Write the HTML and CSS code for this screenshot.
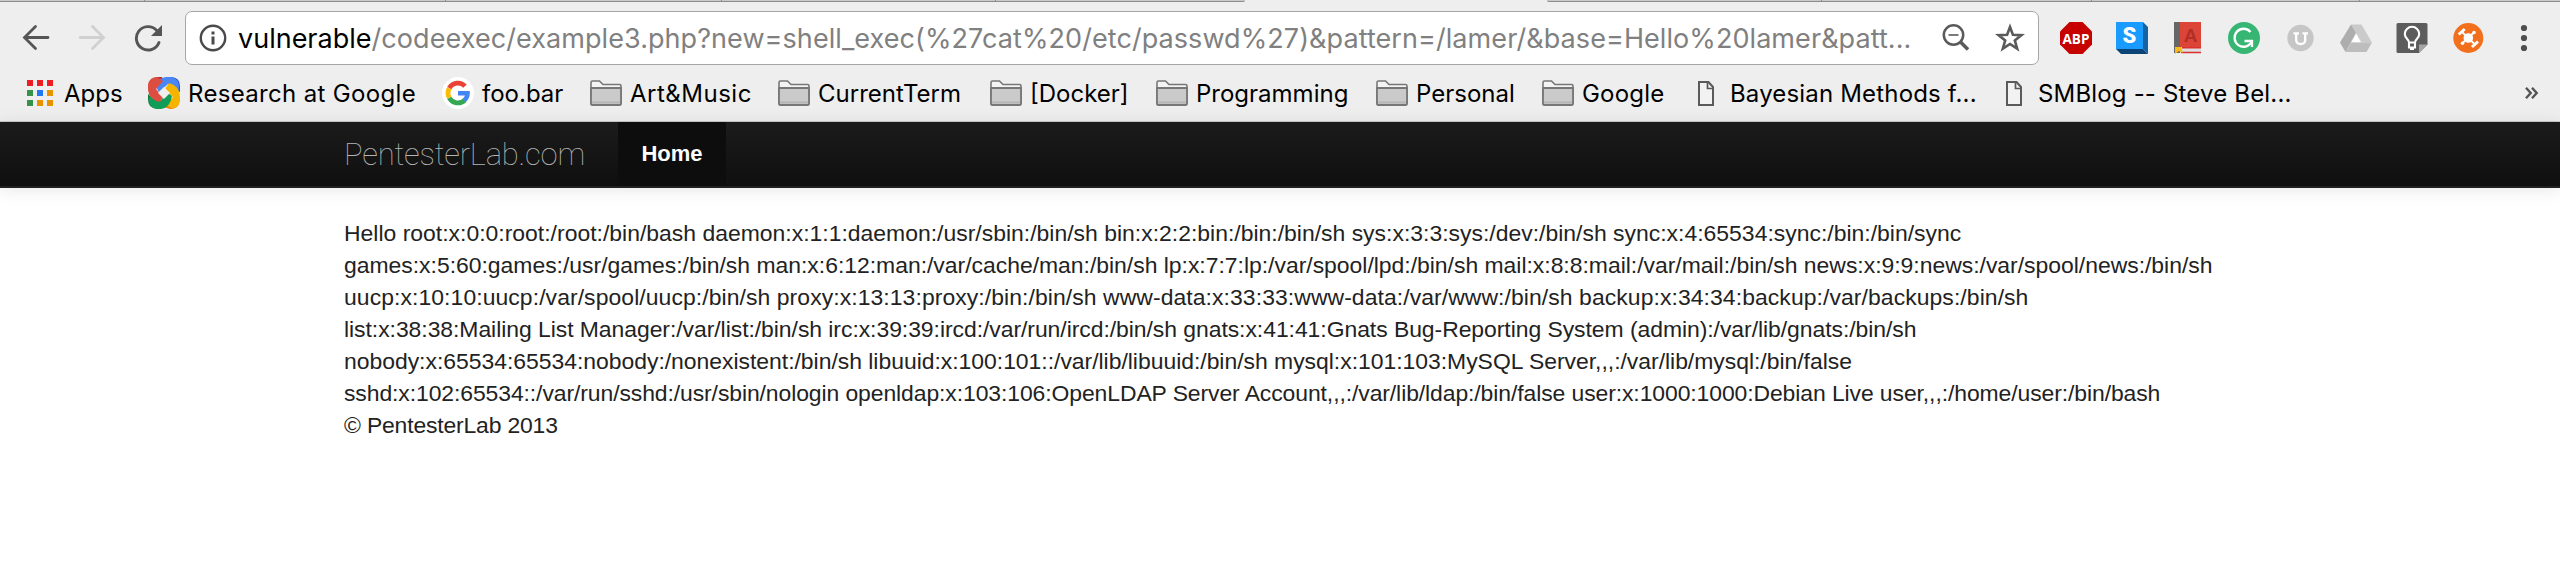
FILE: index.html
```
<!DOCTYPE html>
<html lang="en">
<head>
<meta charset="utf-8">
<title>PentesterLab.com</title>
<link rel="stylesheet" href="styles.css">
</head>
<body>
<svg width="0" height="0" class="defs" aria-hidden="true">
  <symbol id="folder" viewBox="0 0 32 32">
    <path d="M1 26V5.5Q1 4 2.500 4H9.500L13 7.500H29.500Q31 7.500 31 9V26.500Q31 28 29.500 28H2.500Q1 28 1 26.500Z" fill="#f4f4f4" stroke="#777" stroke-width="1.6"/>
    <path d="M1 11H31V26.500Q31 28 29.500 28H2.500Q1 28 1 26.500Z" fill="#cacaca" stroke="#777" stroke-width="1.8"/>
    <path d="M2 25.500H30" stroke="#b5b5b5" stroke-width="2"/>
  </symbol>
  <symbol id="page" viewBox="0 0 32 32">
    <path d="M9 5H18.500L23 10V28H9Z" fill="#f2f2f2" stroke="#5a5a5a" stroke-width="2"/>
    <path d="M17.500 5V11.500H23" fill="none" stroke="#5a5a5a" stroke-width="1.700"/>
  </symbol>
</svg>

<header class="chrome">
  <div class="tabs">
    <div class="tabgroup left"><i></i><i></i><i></i><i></i></div>
    <div class="tabgroup right"><i></i><i></i><i></i></div>
  </div>

  <div class="toolbar">
    <svg class="nav-icon" viewBox="0 0 28 32" fill="none" stroke="#555" stroke-width="2.800" stroke-linecap="round"><path d="M26 15.500H3M13.500 4.500L2.500 15.500L13.500 26.500"/></svg>
    <svg class="nav-icon" viewBox="0 0 28 32" fill="none" stroke="#d0d0d0" stroke-width="2.800" stroke-linecap="round"><path d="M2.300 15.500H25M14.500 4.500L25.500 15.500L14.500 26.500"/></svg>
    <svg class="nav-icon" viewBox="0 0 28 32"><path d="M22.500 8.200A11.700 11.700 0 1 0 25 20.500" fill="none" stroke="#555" stroke-width="2.900" stroke-linecap="round"/><path d="M28 3V14H17Z" fill="#555"/></svg>

    <div class="omnibox">
      <svg class="info" viewBox="0 0 28 28"><circle cx="14" cy="14" r="12.200" fill="none" stroke="#4a4a4a" stroke-width="2.400"/><path d="M14 7.500V10.500M14 12.500V20.500" stroke="#4a4a4a" stroke-width="3"/></svg>
      <div class="url"><span class="host">vulnerable</span><span class="path">/codeexec/example3.php?new=shell_exec(%27cat%20/etc/passwd%27)&amp;pattern=/lamer/&amp;base=Hello%20lamer&amp;patt...</span></div>
      <svg class="zoom" viewBox="0 0 28 28" fill="none" stroke="#5a5a5a"><circle cx="11.500" cy="11" r="9.700" stroke-width="2.500"/><path d="M6.500 11H16.500" stroke-width="1.600"/><path d="M18.500 18L26 25.500" stroke-width="3.500"/></svg>
      <svg class="star" viewBox="0 0 30 30"><path d="M15 4L17.900 11.700L26.500 12.100L19.800 17.400L22.200 25.700L15 21L7.800 25.700L10.200 17.400L3.500 12.100L12.100 11.700Z" fill="none" stroke="#5a5a5a" stroke-width="2.600"/></svg>
    </div>

    <div class="extensions">
      <svg viewBox="0 0 32 32"><path d="M9.500 0H22.500L32 9.500V22.500L22.500 32H9.500L0 22.500V9.500Z" fill="#c70000"/><text x="16" y="22" text-anchor="middle" class="abp" textLength="27" lengthAdjust="spacingAndGlyphs">ABP</text></svg>
      <svg viewBox="0 0 32 32"><path d="M27 0L32 5V32L27 27Z" fill="#1464a5"/><path d="M0 27H27L32 32H5Z" fill="#0c4478"/><path d="M0 0H27V27H0Z" fill="#1a9bff"/><text x="13.500" y="21" text-anchor="middle" class="ess">S</text></svg>
      <svg viewBox="0 0 32 32"><path d="M2 0H8V31H2Z" fill="#666"/><path d="M8 0H29V25H8Z" fill="#dc4437"/><path d="M8 26H29V31H8Z" fill="#ddd"/><path d="M10 25.800H29M9 30.500H29" stroke="#dc3030" stroke-width="1.600"/><path d="M3 25H9L11 31L7 29L3 32Z" fill="#fbb917"/><text x="18.500" y="20" text-anchor="middle" class="dict">A</text></svg>
      <svg viewBox="0 0 32 32"><circle cx="16" cy="16" r="16" fill="#36b573"/><path d="M22.500 10A9 9 0 1 0 23.500 20" fill="none" stroke="#fff" stroke-width="2.300"/><path d="M16.500 19H24V25" fill="none" stroke="#fff" stroke-width="2.300"/></svg>
      <svg viewBox="0 0 32 32"><circle cx="16.500" cy="16" r="13.200" fill="#c6c6c6"/><path d="M9.500 11.300H15M18.500 11.300H24M12.200 11V18Q12.200 22 16.700 22Q21.200 22 21.200 18V11" fill="none" stroke="#fff" stroke-width="2.300"/></svg>
      <svg viewBox="0 0 32 32"><path d="M11 2.500H21.500L32 20.500H21.500Z" fill="#cacaca"/><path d="M11 2.500L16 11L5.500 30L0 20.500Z" fill="#adadad"/><path d="M11 20.500H32L26.500 30H5.500Z" fill="#bdbdbd"/><path d="M16.200 12L20.500 20H12Z" fill="#fff"/></svg>
      <svg viewBox="0 0 32 32"><path d="M2 1H30Q31.500 1 31.500 2.500V22.500L23 31H2Q0.500 31 0.500 29.500V2.500Q0.500 1 2 1Z" fill="#5c5c5c"/><path d="M23 31V22.500H31.500Z" fill="#a5a5a5"/><path d="M13 20.500C13 17 8.800 17 8.800 12A7.200 7.200 0 0 1 23.200 12C23.200 17 19 17 19 20.500ZM13 20V25.500H19V20M14 27H18" fill="none" stroke="#fff" stroke-width="2.100"/></svg>
      <svg viewBox="0 0 32 32"><circle cx="16.300" cy="16" r="15" fill="#f26f1c"/><circle cx="16.300" cy="16" r="4.800" fill="#fff"/><path d="M10 10L22.500 22M10.500 21L22 10.500" stroke="#fff" stroke-width="1.800"/><path d="M6.700 12.500L12.700 7M20 25L26 19.500" stroke="#fff" stroke-width="3"/><circle cx="22" cy="10.500" r="1.800" fill="#fff"/><circle cx="10.500" cy="21.300" r="1.800" fill="#fff"/></svg>
      <svg viewBox="0 0 32 32" fill="#4d4d4d"><circle cx="16" cy="6" r="3.100"/><circle cx="16" cy="16" r="3.100"/><circle cx="16" cy="26" r="3.100"/></svg>
    </div>
  </div>

  <nav class="bookmarks">
    <a><svg viewBox="0 0 32 32"><path d="M3 3H9V9H3ZM13 3H19V9H13ZM23 3H29V9H23Z" fill="#ee1c25"/><path d="M3 13H9V19H3ZM3 23H9V29H3Z" fill="#369247"/><path d="M13 13H19V19H13Z" fill="#1f78f5"/><path d="M23 13H29V19H23ZM13 23H19V29H13ZM23 23H29V29H23Z" fill="#e89200"/></svg><span>Apps</span></a>
    <a><svg viewBox="0 0 32 32">
      <path d="M16 1L24 0Q32 1 32 9V15L24 13Z" fill="#2a56c6"/><path d="M31 16V24Q31 32 22 32L16 30Z" fill="#f57c00"/><path d="M0 17L8 25L14 31H8Q0 31 0 22Z" fill="#0b7a43"/><path d="M1 12Q0 1 9 0H14L16 6Z" fill="#b5342a"/>
      <path d="M8 10Q9 1 18 0H24Q31 2 31 10Q31 14 29 16L20 7L11 15Z" fill="#4a86f4"/>
      <path d="M21 6Q32 9 32 20V24Q31 32 23 31L18 28L25 20L17 12Z" fill="#f4b400"/>
      <path d="M24 19Q22 31 13 32H8Q0 30 1 21L3 17L12 24L20 16Z" fill="#109d58"/>
      <path d="M12 25Q1 23 0 13V7Q2 0 9 0L15 4L8 12L15 20Z" fill="#dc4e41"/>
      <path d="M16 10L22 16L16 22L10 16Z" fill="#eee"/></svg><span class="research">Research at Google</span></a>
    <a><svg viewBox="0 0 32 32" fill="none" stroke-width="4.800"><circle cx="16" cy="16" r="16" fill="#fff"/><path d="M7.300 11.200A9.800 9.800 0 0 1 23 9.200" stroke="#ea4335"/><path d="M7.300 20.800A9.800 9.800 0 0 1 7.300 11.200" stroke="#fbbc05"/><path d="M22.700 23.200A9.800 9.800 0 0 1 7.300 20.800" stroke="#34a853"/><path d="M16 16.200H25.600Q25.600 20.500 22.200 23.500" stroke="#4285f4" stroke-width="4.400"/></svg><span>foo.bar</span></a>
    <a><svg><use href="#folder"/></svg><span class="art">Art&amp;Music</span></a>
    <a><svg><use href="#folder"/></svg><span>CurrentTerm</span></a>
    <a><svg><use href="#folder"/></svg><span>[Docker]</span></a>
    <a><svg><use href="#folder"/></svg><span>Programming</span></a>
    <a><svg><use href="#folder"/></svg><span>Personal</span></a>
    <a><svg><use href="#folder"/></svg><span class="google">Google</span></a>
    <a><svg><use href="#page"/></svg><span class="long">Bayesian Methods f...</span></a>
    <a><svg><use href="#page"/></svg><span class="long">SMBlog -- Steve Bel...</span></a>
    <svg class="more" viewBox="0 0 14 12" fill="none" stroke="#555" stroke-width="2.400"><path d="M1 0.800L5.700 6L1 11.200M7 0.800L11.700 6L7 11.200"/></svg>
  </nav>
</header>

<div class="navbar">
  <a class="brand">PentesterLab.com</a>
  <a class="home">Home</a>
</div>

<main class="content">
  <p class="l1">Hello root:x:0:0:root:/root:/bin/bash daemon:x:1:1:daemon:/usr/sbin:/bin/sh bin:x:2:2:bin:/bin:/bin/sh sys:x:3:3:sys:/dev:/bin/sh sync:x:4:65534:sync:/bin:/bin/sync</p>
  <p class="l2">games:x:5:60:games:/usr/games:/bin/sh man:x:6:12:man:/var/cache/man:/bin/sh lp:x:7:7:lp:/var/spool/lpd:/bin/sh mail:x:8:8:mail:/var/mail:/bin/sh news:x:9:9:news:/var/spool/news:/bin/sh</p>
  <p class="l3">uucp:x:10:10:uucp:/var/spool/uucp:/bin/sh proxy:x:13:13:proxy:/bin:/bin/sh www-data:x:33:33:www-data:/var/www:/bin/sh backup:x:34:34:backup:/var/backups:/bin/sh</p>
  <p class="l4">list:x:38:38:Mailing List Manager:/var/list:/bin/sh irc:x:39:39:ircd:/var/run/ircd:/bin/sh gnats:x:41:41:Gnats Bug-Reporting System (admin):/var/lib/gnats:/bin/sh</p>
  <p class="l5">nobody:x:65534:65534:nobody:/nonexistent:/bin/sh libuuid:x:100:101::/var/lib/libuuid:/bin/sh mysql:x:101:103:MySQL Server,,,:/var/lib/mysql:/bin/false</p>
  <p class="l6">sshd:x:102:65534::/var/run/sshd:/usr/sbin/nologin openldap:x:103:106:OpenLDAP Server Account,,,:/var/lib/ldap:/bin/false user:x:1000:1000:Debian Live user,,,:/home/user:/bin/bash</p>
  <footer>© PentesterLab 2013</footer>
</main>
</body>
</html>
```
FILE: styles.css
```
* { box-sizing: border-box; }
body { margin: 0; height: 582px; background: #fff; overflow: hidden; }
svg { display: block; flex: none; }
.defs { position: absolute; }

.chrome {
  height: 122px;
  background: #eee;
  border-bottom: 1px solid #c8c8c8;
  font-family: Inter, sans-serif;
  color: #000;
}
.tabs { display: flex; justify-content: space-between; height: 2px; }
.tabgroup { display: grid; background: #c9c9c9; border-bottom: 1px solid #8e8e8e; }
.tabgroup i { border-right: 1px solid #8e8e8e; }
.left { width: 1245px; grid-template-columns: 145px 301px 276px 274px; border-radius: 0 0 3px 0; }
.right { width: 1013px; grid-template-columns: 275px 270px 268px; border-radius: 0 0 0 3px; }

.toolbar { display: flex; align-items: center; height: 72px; padding-left: 22px; }
.nav-icon { width: 28px; height: 32px; margin-right: 28px; }
.nav-icon:nth-child(3) { margin-right: 23px; }
.omnibox {
  display: flex;
  align-items: center;
  width: 1854px;
  height: 54px;
  padding-left: 13px;
  background: #fff;
  border: 1px solid #a6a6a6;
  border-radius: 7px;
}
.info { width: 28px; height: 28px; }
.url { width: 1715px; padding: 2px 0 0 11px; font-size: 27px; line-height: 40px; white-space: nowrap; }
.path { color: #808080; letter-spacing: 0.07px; }
.zoom { width: 28px; height: 28px; }
.star { width: 30px; height: 30px; margin-left: 25px; }
.extensions { display: flex; gap: 24px; margin-left: 21px; }
.extensions svg { width: 32px; height: 32px; }
.abp { font: 700 15px "Open Sans", sans-serif; fill: #fff; }
.ess { font: 900 22px Roboto, sans-serif; fill: #fff; }
.dict { font: 700 19px "Liberation Sans", sans-serif; fill: #b03028; }

.bookmarks {
  display: grid;
  grid-template-columns: 124px 294px 148px 188px 212px 166px 220px 166px 148px 308px 520px auto;
  align-items: center;
  height: 38px;
  padding-left: 24px;
  font-size: 24px;
  line-height: 32px;
  white-space: nowrap;
}
.bookmarks a { display: flex; align-items: center; gap: 8px; }
.bookmarks a svg { width: 32px; height: 32px; }
.bookmarks span { padding-top: 1px; }
.research { letter-spacing: 0.33px; }
.art { letter-spacing: 0.5px; }
.google { letter-spacing: 0.2px; }
.long { letter-spacing: 0.17px; }
.bookmarks .more { width: 14px; height: 12px; margin-left: 7px; }

.navbar {
  display: flex;
  height: 66px;
  padding-left: 344px;
  background: linear-gradient(#1b1b1b, #0f0f0f);
  border-bottom: 2px solid #222022;
  box-shadow: 0 2px 16px rgba(0, 0, 0, 0.1);
}
.brand {
  width: 274px;
  padding-top: 1px;
  font: 100 31px/64px Roboto, sans-serif;
  letter-spacing: -0.2px;
  color: #b4b4b4;
}
.home {
  width: 108px;
  background: #0d0d0d;
  text-align: center;
  font: 700 22px/64px "Liberation Sans", sans-serif;
  color: #fff;
}

.content {
  padding: 29px 0 0 344px;
  font: 22.93px/32px "Liberation Sans", sans-serif;
  color: #222;
  white-space: nowrap;
}
.content p { margin: 0; }
.l1 { letter-spacing: 0.01px; }
.l2 { letter-spacing: -0.01px; }
.l3 { letter-spacing: 0.08px; }
.l4 { letter-spacing: -0.045px; }
.l5 { letter-spacing: -0.016px; }
.l6 { letter-spacing: -0.088px; }
.content footer { letter-spacing: -0.17px; }
```
